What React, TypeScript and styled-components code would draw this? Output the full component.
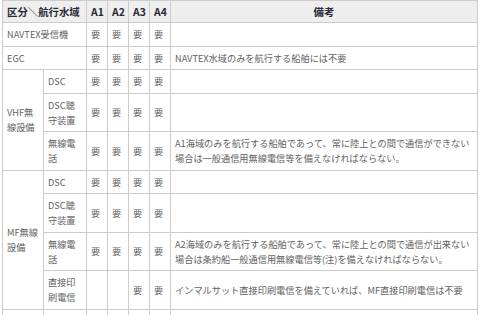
import styled, { createGlobalStyle } from 'styled-components';

const GlobalStyle = createGlobalStyle`
  html, body {
    margin: 0;
    padding: 0;
    background: #fff;
  }
  body {
    font-family: 'Noto Sans CJK JP', 'Liberation Sans', sans-serif;
  }
`;

const Wrapper = styled.div`
  padding: 0 0 0 2px;
`;

const Table = styled.table`
  width: 476px;
  table-layout: fixed;
  border-collapse: collapse;
  font-size: 9.2px;
  line-height: 15px;
  color: #626262;
`;

const HeadCell = styled.th`
  padding: 3px 4px;
  background: #eeeeee;
  border: 1px solid #cccccc;
  color: #2a2a3a;
  font-size: 10.4px;
  font-weight: bold;
  text-align: ${(props: { $align?: string }) => props.$align || 'left'};
  vertical-align: middle;
`;

const Cell = styled.td`
  padding: 4px 4px 3.5px;
  border: 1px solid #cccccc;
  text-align: left;
  vertical-align: middle;
  word-break: break-all;
`;

const EmptyRow = styled.tr`
  height: 40px;
`;

interface IRow {
  group?: { label: string; span: number };
  item: string;
  wide?: boolean;
  marks: boolean[];
  note?: string[];
}

const ALL = [true, true, true, true];

const rows: IRow[] = [
  { item: 'NAVTEX受信機', wide: true, marks: ALL },
  { item: 'EGC', wide: true, marks: ALL, note: ['NAVTEX水域のみを航行する船舶には不要'] },
  { group: { label: 'VHF無線設備', span: 3 }, item: 'DSC', marks: ALL },
  { item: 'DSC聴守装置', marks: ALL },
  {
    item: '無線電話',
    marks: ALL,
    note: [
      'A1海域のみを航行する船舶であって、常に陸上との間で通信ができない',
      '場合は一般通信用無線電信等を備えなければならない。',
    ],
  },
  { group: { label: 'MF無線設備', span: 4 }, item: 'DSC', marks: ALL },
  { item: 'DSC聴守装置', marks: ALL },
  {
    item: '無線電話',
    marks: ALL,
    note: [
      'A2海域のみを航行する船舶であって、常に陸上との間で通信が出来ない',
      '場合は条約船一般通信用無線電信等(注)を備えなければならない。',
    ],
  },
  {
    item: '直接印刷電信',
    marks: [false, false, true, true],
    note: ['インマルサット直接印刷電信を備えていれば、MF直接印刷電信は不要'],
  },
];

export default function App() {
  return (
    <>
      <GlobalStyle />
      <Wrapper>
        <Table>
          <colgroup>
            <col style={{ width: 41 }} />
            <col style={{ width: 43 }} />
            <col style={{ width: 21 }} />
            <col style={{ width: 21 }} />
            <col style={{ width: 21 }} />
            <col style={{ width: 21 }} />
            <col />
          </colgroup>
          <thead>
            <tr>
              <HeadCell colSpan={2}>区分＼航行水域</HeadCell>
              <HeadCell>A1</HeadCell>
              <HeadCell>A2</HeadCell>
              <HeadCell>A3</HeadCell>
              <HeadCell>A4</HeadCell>
              <HeadCell $align="center">備考</HeadCell>
            </tr>
          </thead>
          <tbody>
            {rows.map((row, i) => (
              <tr key={i}>
                {row.group && <Cell rowSpan={row.group.span}>{row.group.label}</Cell>}
                <Cell colSpan={row.wide ? 2 : 1}>{row.item}</Cell>
                {row.marks.map((m, j) => (
                  <Cell key={j}>{m ? '要' : ''}</Cell>
                ))}
                <Cell>
                  {row.note?.map((line, k) => (
                    <span key={k}>
                      {k > 0 && <br />}
                      {line}
                    </span>
                  ))}
                </Cell>
              </tr>
            ))}
            <EmptyRow>
              <Cell rowSpan={2} />
              <Cell />
              <Cell />
              <Cell />
              <Cell />
              <Cell />
              <Cell />
            </EmptyRow>
          </tbody>
        </Table>
      </Wrapper>
    </>
  );
}
